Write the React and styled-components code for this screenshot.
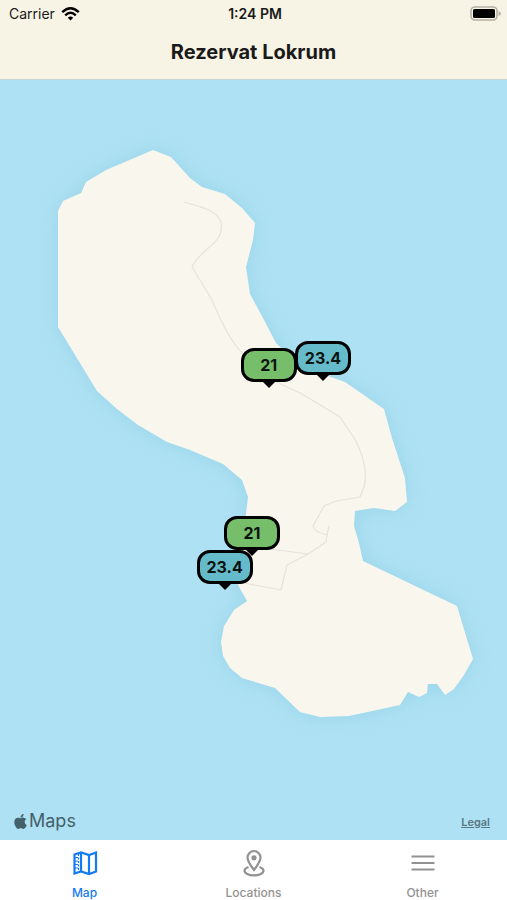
import React, { useState } from "react";
import styled, { createGlobalStyle } from "styled-components";
import { FaApple } from "react-icons/fa";

const GlobalStyle = createGlobalStyle`
  *, *::before, *::after { box-sizing: border-box; }
  body {
    margin: 0;
    font-family: Inter, "Liberation Sans", sans-serif;
    color: #1a1a1a;
  }
`;

const Screen = styled.div`
  display: flex;
  flex-direction: column;
  min-height: 100vh;
  background: #aee1f3;
`;

const Header = styled.header`
  background: #f7f3e5;
  border-bottom: 1px solid #c9d3d0;
`;

const StatusBar = styled.div`
  display: grid;
  grid-template-columns: 1fr auto 1fr;
  align-items: center;
  height: 27px;
  padding: 0 6px 0 9px;
  font-size: 14px;
`;

const Carrier = styled.span`
  display: flex;
  align-items: center;
  gap: 6px;
`;

const Time = styled.time`
  font-weight: 600;
`;

const BatteryIcon = styled.svg`
  justify-self: end;
`;

const Title = styled.h1`
  margin: 0;
  height: 52px;
  line-height: 50px;
  text-align: center;
  font-size: 20px;
  font-weight: 700;
`;

const MapView = styled.main`
  position: relative;
  display: flex;
  flex: 1;
  align-items: flex-end;
  justify-content: space-between;
  padding: 8px 17px 7px 12px;
  overflow: hidden;
`;

const MapDrawing = styled.svg`
  position: absolute;
  inset: 0;
  width: 100%;
  height: 100%;
`;

const Brand = styled.span`
  position: relative;
  display: flex;
  align-items: center;
  color: #44606b;
  font-size: 18px;
  line-height: 24px;
`;

const Legal = styled.a`
  position: relative;
  color: #5b7883;
  font-size: 11px;
  font-weight: 600;
  line-height: 22px;
`;

const Pin = styled.button`
  position: absolute;
  left: ${(p) => p.$x}%;
  top: ${(p) => p.$y}%;
  transform: translate(-50%, -40px);
  width: 56px;
  height: 34px;
  padding: 0;
  border: 3px solid #000;
  border-radius: 13px;
  background: ${(p) => (p.$tone === "green" ? "#77be6b" : "#66bbcb")};
  color: #0b1410;
  font: inherit;
  font-size: 16px;
  font-weight: 700;
  cursor: pointer;

  &::after {
    content: "";
    position: absolute;
    top: 100%;
    left: 50%;
    margin-left: -9px;
    border: 9px solid transparent;
    border-top-color: #000;
    border-bottom: 0;
  }
`;

const TabBar = styled.nav`
  display: grid;
  grid-template-columns: repeat(3, 1fr);
  height: 60px;
  background: #fff;
`;

const Tab = styled.button`
  display: flex;
  flex-direction: column;
  align-items: center;
  gap: 7px;
  padding: 8px 0 0;
  border: 0;
  background: none;
  color: ${(p) => (p.$active ? "#147bf0" : "#929292")};
  font: inherit;
  font-size: 12px;
  font-weight: 500;
  line-height: 16px;
  cursor: pointer;
`;

const coast =
  "M153 150 L171 157 L190 178 L202 187 L225 194 L242 208 L255 223 L253 240 L246 267 L250 294 L263 318 L276 343 L300 366 L345 382 L384 409 L392 438 L405 478 L407 502 L395 511 L374 508 L355 511 L354 526 L359 543 L363 561 L457 606 L473 659 L464 675 L454 689 L445 695 L437 684 L428 684 L427 693 L419 697 L408 692 L400 705 L349 716 L320 717 L300 712 L275 688 L242 678 L230 668 L223 656 L221 642 L224 626 L234 610 L247 601 L239 587 L230 565 L243 548 L246 514 L248 497 L242 480 L223 464 L190 450 L167 442 L138 425 L117 409 L97 391 L58 327 L58 211 L63 201 L81 193 L86 182 L106 170 Z";

const trails = [
  "M184 202 C200 207 217 210 221 222 C223 235 217 241 206 250 C196 260 194 262 192 267 L211 298 C222 323 229 340 245 356 L272 380 L302 394 L340 417 L356 441 Q369 468 364 487 L360 497 L336 501 L324 506 L313 526 Q314 532 327 535 L329 526",
  "M327 535 L326 542 L308 554 L287 565 L281 590 L244 583",
  "M308 554 L270 549 L252 549",
];

const pins = [
  { id: "east-sea", value: "23.4", tone: "blue", x: 63.7, y: 39.6 },
  { id: "east-air", value: "21", tone: "green", x: 53, y: 40.5 },
  { id: "west-air", value: "21", tone: "green", x: 49.7, y: 62.6 },
  { id: "west-sea", value: "23.4", tone: "blue", x: 44.3, y: 67.1 },
];

const WifiIcon = () => (
  <svg width="19" height="14" viewBox="0 0 19 14" fill="none" stroke="#000" strokeWidth="2.4" aria-hidden="true">
    <path d="M1.2 5.2 Q9.5 -2.6 17.8 5.2" />
    <path d="M4.2 8.3 Q9.5 3.3 14.8 8.3" />
    <path d="M6.8 10.7 Q9.5 8.3 12.2 10.7 L9.5 13.5 Z" fill="#000" stroke="none" />
  </svg>
);

const Battery = () => (
  <BatteryIcon width="31" height="16" viewBox="0 0 31 16" role="img" aria-label="Battery full">
    <rect x="1" y="1" width="26" height="13" rx="4" fill="#f7f3e5" stroke="#b5b1a6" strokeWidth="1.6" />
    <rect x="3" y="3" width="22" height="9" rx="1.500" fill="#000" />
    <path d="M28.500 5 Q31 6 31 7.500 Q31 9 28.500 10 Z" fill="#b5b1a6" />
  </BatteryIcon>
);

const MapIcon = () => (
  <svg width="30" height="30" viewBox="0 0 30 30" fill="none" stroke="currentColor" strokeWidth="2.2" aria-hidden="true">
    <path d="M4.500 6.500 L11 4.500 L19 7 L26 4.500 V23.500 L19 26 L11 23.500 L4.500 25.500 Z" />
    <path d="M11 4.500 V23.500 M19 7 V26" />
    <path d="M5 9.500 H8 M5 13 H8 M5 16.500 H8 M5 20 H8" strokeWidth="1.200" />
    <path d="M8.500 6 V24" strokeWidth="1.200" strokeDasharray="2 1.500" />
  </svg>
);

const LocationIcon = () => (
  <svg width="30" height="30" viewBox="0 0 30 30" fill="none" stroke="currentColor" strokeWidth="2.2" aria-hidden="true">
    <path d="M15 22 C11 16.500 8.500 13.500 8.500 9.500 A6.500 6.500 0 0 1 21.500 9.500 C21.500 13.500 19 16.500 15 22 Z" />
    <circle cx="15" cy="9.800" r="2.600" fill="currentColor" stroke="none" />
    <path d="M9.500 19 C6.500 20 5.500 21 5.500 22.500 C5.500 25.200 9.500 27.300 15 27.300 C20.500 27.300 24.500 25.200 24.500 22.500 C24.500 21 23.500 20 20.500 19" />
  </svg>
);

const MenuIcon = () => (
  <svg width="30" height="30" viewBox="0 0 30 30" stroke="currentColor" strokeWidth="2.2" aria-hidden="true">
    <path d="M3.500 8.500 H26.500 M3.500 15 H26.500 M3.500 21.500 H26.500" />
  </svg>
);

const tabs = [
  { label: "Map", Icon: MapIcon },
  { label: "Locations", Icon: LocationIcon },
  { label: "Other", Icon: MenuIcon },
];

export default function App() {
  const [active, setActive] = useState("Map");

  return (
    <Screen>
      <GlobalStyle />
      <Header>
        <StatusBar>
          <Carrier>
            Carrier
            <WifiIcon />
          </Carrier>
          <Time>1:24 PM</Time>
          <Battery />
        </StatusBar>
        <Title>Rezervat Lokrum</Title>
      </Header>

      <MapView>
        <MapDrawing viewBox="0 80 507 760" preserveAspectRatio="xMidYMid slice" role="img" aria-label="Lokrum island">
          <defs>
            <filter id="shallows" x="-20%" y="-20%" width="140%" height="140%">
              <feGaussianBlur stdDeviation="10" />
            </filter>
          </defs>
          <path d={coast} fill="#86c8e0" opacity="0.5" filter="url(#shallows)" />
          <path d={coast} fill="#f9f6ed" />
          {trails.map((d) => (
            <path key={d} d={d} fill="none" stroke="#e6e3dc" strokeWidth="1.2" strokeLinejoin="round" />
          ))}
        </MapDrawing>
        {pins.map((pin) => (
          <Pin key={pin.id} type="button" $x={pin.x} $y={pin.y} $tone={pin.tone}>
            {pin.value}
          </Pin>
        ))}
        <Brand>
          <FaApple size={17} aria-hidden="true" />
          Maps
        </Brand>
        <Legal href="#legal">Legal</Legal>
      </MapView>

      <TabBar>
        {tabs.map(({ label, Icon }) => (
          <Tab
            key={label}
            type="button"
            $active={active === label}
            aria-current={active === label ? "page" : undefined}
            onClick={() => setActive(label)}
          >
            <Icon />
            {label}
          </Tab>
        ))}
      </TabBar>
    </Screen>
  );
}
